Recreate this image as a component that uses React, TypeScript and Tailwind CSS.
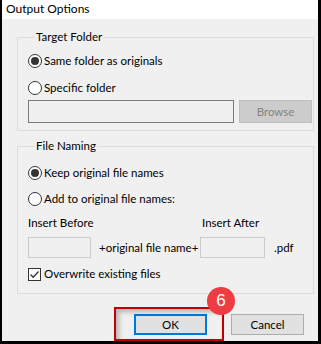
import React from "react";

const Radio = ({ checked, label }: { checked?: boolean; label: string }) => (
  <div className="flex items-center h-[16px]">
    <span className="w-[14px] h-[14px] rounded-full border border-[#333333] bg-white flex items-center justify-center">
      {checked && <span className="w-[8px] h-[8px] rounded-full bg-[#333333]" />}
    </span>
    <span className="ml-[2px]">{label}</span>
  </div>
);

const Checkbox = ({ checked, label }: { checked?: boolean; label: string }) => (
  <div className="flex items-center h-[16px]">
    <span className="w-[13px] h-[13px] border border-[#333333] bg-white flex items-center justify-center">
      {checked && (
        <svg width="11" height="11" viewBox="0 0 11 11">
          <path d="M1.5 5.5 L4.2 8.2 L9.5 2.5" fill="none" stroke="#333333" strokeWidth="1.3" />
        </svg>
      )}
    </span>
    <span className="ml-[3px]">{label}</span>
  </div>
);

export default function App() {
  return (
    <div className="relative w-[321px] h-[344px] bg-black pl-[2px] pr-[3px] pb-[3px] text-[11.5px] text-black leading-[16px] whitespace-nowrap font-['Lato',_'Liberation_Sans',_sans-serif]">
      <div className="h-full bg-[#f0f0f0] flex flex-col">
        <div className="h-[19px] bg-white pl-[4px] pt-[1px] text-[12px]">Output Options</div>

        <div className="pl-[15px] pr-[4px]">
          <fieldset className="mt-[10px] border border-[#dcdcdc] pl-[10px] pr-[1px] pb-[7px]">
            <legend className="ml-[7px] px-[1px] leading-[16px]">Target Folder</legend>
            <div className="mt-[8px]">
              <Radio checked label="Same folder as originals" />
            </div>
            <div className="mt-[11px]">
              <Radio label="Specific folder" />
            </div>
            <div className="mt-[4px] flex items-center">
              <div className="w-[206px] h-[23px] border border-[#7a7a7a] bg-[#f0f0f0]" />
              <div className="ml-[5px] w-[73px] h-[23px] border border-[#bfbfbf] bg-[#cccccc] text-[#838383] flex items-center justify-center">
                Browse
              </div>
            </div>
          </fieldset>

          <fieldset className="mt-[7px] border border-[#dcdcdc] pl-[10px] pr-[1px] pb-[11px]">
            <legend className="ml-[7px] px-[1px] leading-[16px]">File Naming</legend>
            <div className="mt-[11px]">
              <Radio checked label="Keep original file names" />
            </div>
            <div className="mt-[10px]">
              <Radio label="Add to original file names:" />
            </div>
            <div className="mt-[8px] flex h-[16px] items-center">
              <span className="w-[174px]">Insert Before</span>
              <span>Insert After</span>
            </div>
            <div className="mt-[6px] flex items-center h-[21px]">
              <div className="w-[63px] h-[21px] border border-[#cccccc] bg-[#f0f0f0]" />
              <span className="w-[109px] pl-[8px]">+original file name+</span>
              <div className="w-[65px] h-[21px] border border-[#cccccc] bg-[#f0f0f0]" />
              <span className="ml-[9px]">.pdf</span>
            </div>
            <div className="mt-[8px]">
              <Checkbox checked label="Overwrite existing files" />
            </div>
          </fieldset>
        </div>

        <div className="mt-[20px] flex justify-end gap-[24px] pr-[14px]">
          <button className="w-[73px] h-[21px] border-2 border-[#0078d7] bg-[#e1e1e1] flex items-center justify-center">
            OK
          </button>
          <button className="w-[73px] h-[21px] border border-[#adadad] bg-[#e1e1e1] flex items-center justify-center">
            Cancel
          </button>
        </div>
      </div>

      <div className="absolute left-[114px] top-[307px] w-[110px] h-[34px] border-2 border-[#c00000] shadow-[inset_3px_3px_5px_rgba(0,0,0,0.25)] pointer-events-none" />
      <div className="absolute left-[207px] top-[287px] w-[28px] h-[28px] rounded-full bg-[#ef3b42] text-white text-[17px] flex items-center justify-center font-['Liberation_Sans',_sans-serif]">
        6
      </div>
    </div>
  );
}
